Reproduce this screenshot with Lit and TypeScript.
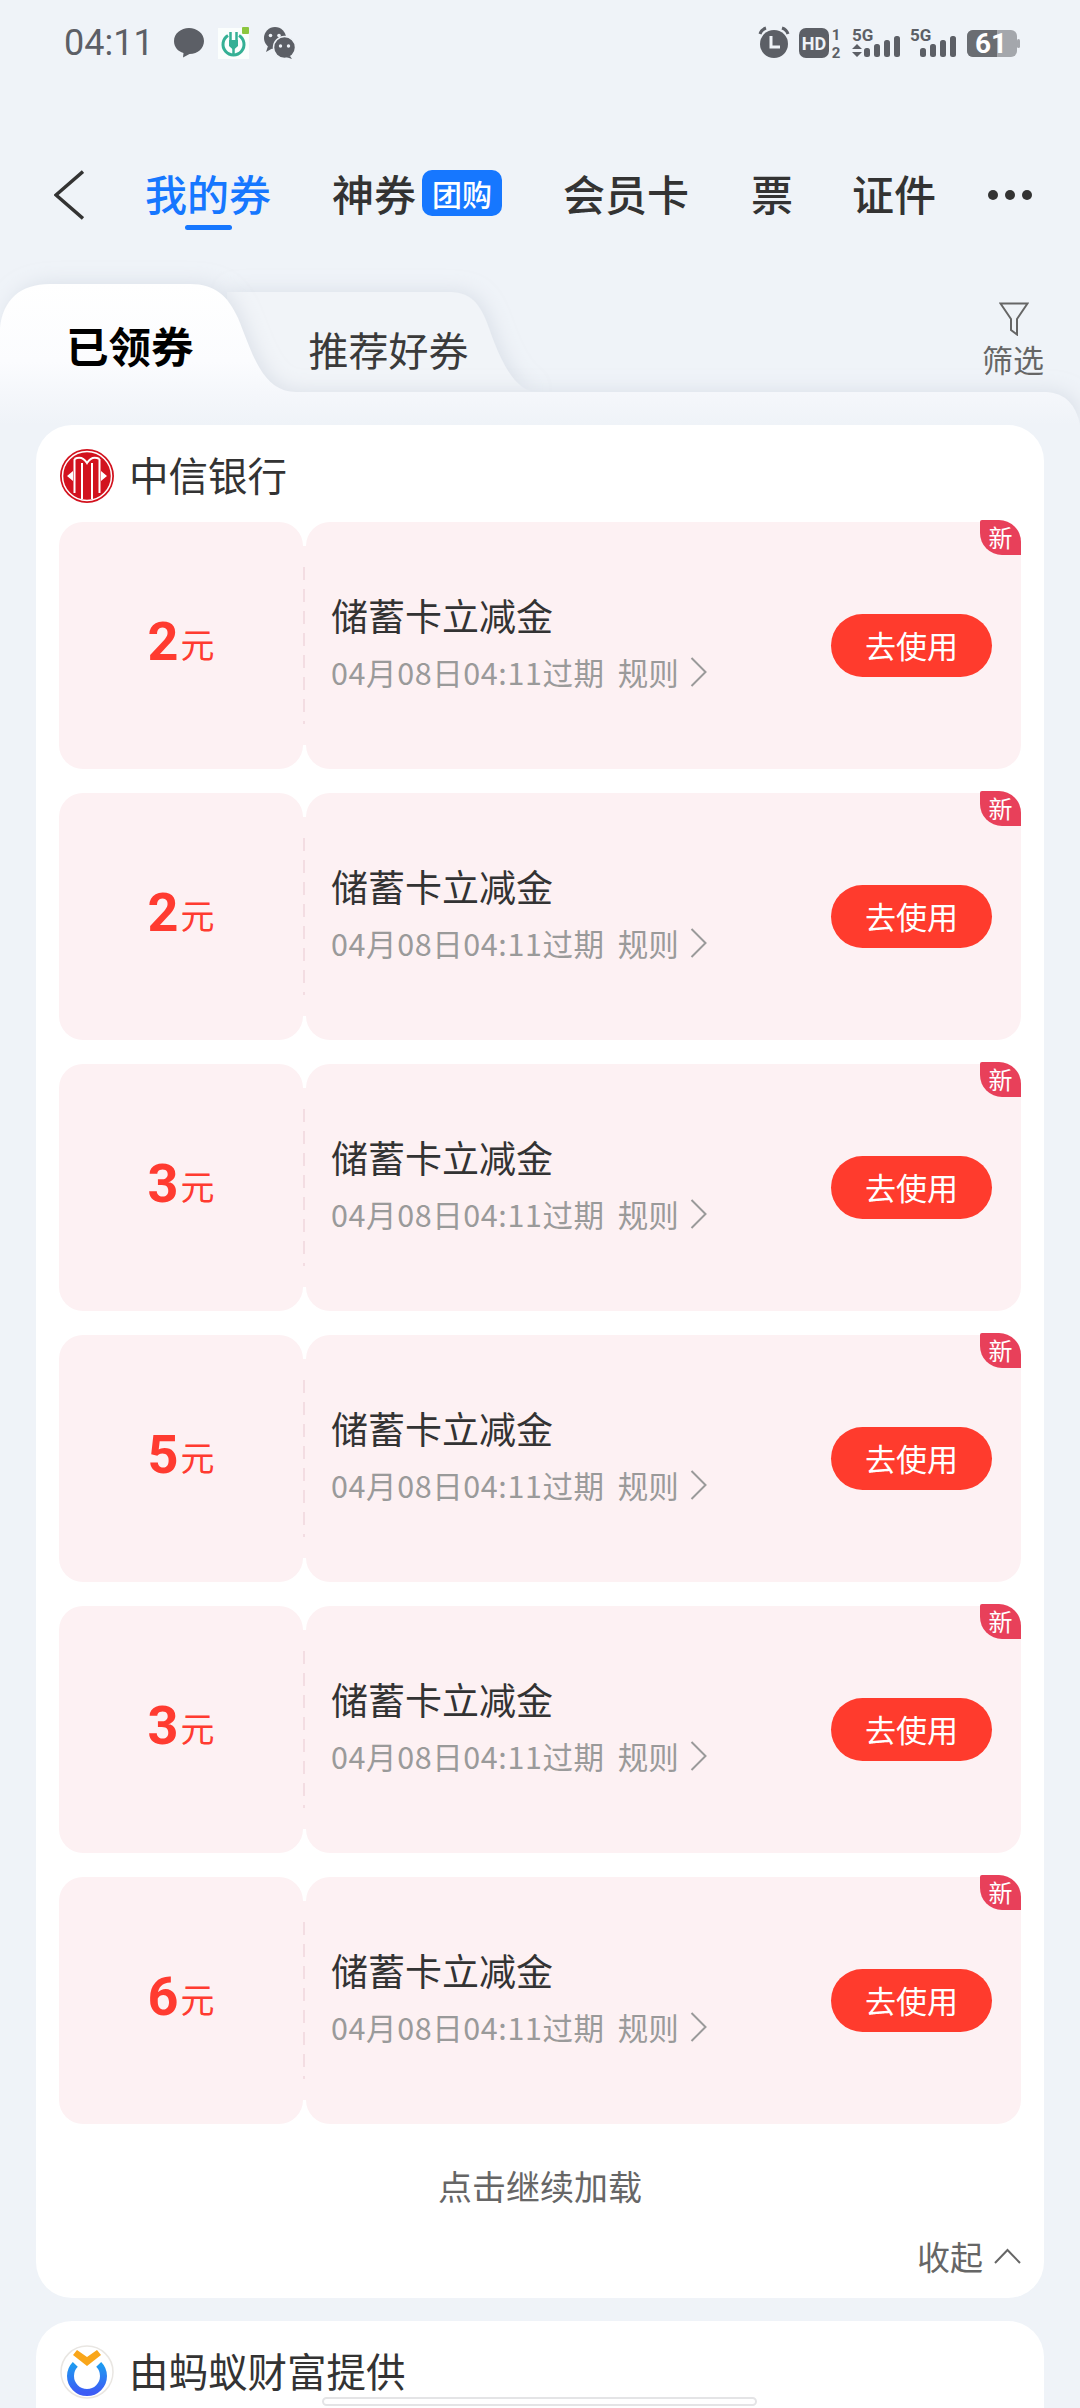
import { LitElement, html, css, svg } from "lit";
import { customElement } from "lit/decorators.js";

const CJK = css`"Noto Sans CJK SC", "Noto Sans", sans-serif`;

@customElement("coupon-row")
class CouponRow extends LitElement {
  static properties = { amount: {} };
  declare amount: string;
  constructor() {
    super();
    this.amount = "2";
  }
  static styles = css`
    :host { display: flex; height: 247px; font-family: ${CJK}; }
    .stub { width: 244px; background: #fdf1f3; border-radius: 24px; display: flex; align-items: center; justify-content: center; color: #ff3b30; }
    .amt { display: flex; align-items: baseline; transform: translateY(-4px); }
    .num { font-family: Roboto, sans-serif; font-weight: 700; font-size: 54px; line-height: 60px; }
    .yuan { font-size: 34px; line-height: 40px; margin-left: 2px; transform: translateY(-2px); }
    .gap { width: 3px; margin: 24px 0; display: flex; align-items: center; background: #fdf1f3; }
    .dash { width: 2px; height: 157px; background: repeating-linear-gradient(to bottom, #f3dde2 0 13px, transparent 13px 22px); }
    .main { position: relative; flex: 1; background: #fdf1f3; border-radius: 24px; display: flex; align-items: center; padding: 0 29px 0 25px; }
    .info { flex: 1; display: flex; flex-direction: column; gap: 13px; transform: translateY(-3px); }
    .title { font-size: 37px; line-height: 46px; color: #333; }
    .meta { display: flex; align-items: center; font-size: 30.5px; line-height: 42px; color: #9a9a9a; white-space: nowrap; }
    .date { letter-spacing: 0.6px; }
    .rule { margin-left: 13px; }
    .meta svg { margin-left: 11px; }
    .btn { width: 161px; height: 63px; box-sizing: border-box; padding-bottom: 3px; border-radius: 32px; background: #ff3b2d; color: #fff; font-size: 31px; display: flex; align-items: center; justify-content: center; }
    .new { position: absolute; right: 0; top: -2px; width: 41px; height: 35px; background: #e8405a; color: #fff; font-size: 24px; line-height: 33px; text-align: center; border-radius: 2px 22px 0 22px; }
  `;
  render() {
    return html`
      <div class="stub"><div class="amt"><span class="num">${this.amount}</span><span class="yuan">元</span></div></div>
      <div class="gap"><div class="dash"></div></div>
      <div class="main">
        <div class="info">
          <div class="title">储蓄卡立减金</div>
          <div class="meta"><span class="date">04月08日04:11过期</span><span class="rule">规则</span>
            <svg width="17" height="30" viewBox="0 0 17 30"><path d="M1.5 1 L15.5 15 L1.5 29" fill="none" stroke="#9a9a9a" stroke-width="2"/></svg>
          </div>
        </div>
        <div class="btn">去使用</div>
        <div class="new">新</div>
      </div>`;
  }
}

@customElement("app-root")
class AppRoot extends LitElement {
  static styles = css`
    :host { display: block; width: 1080px; height: 2408px; overflow: hidden; position: relative; background: #eff3f8; font-family: ${CJK}; color: #333; }
    .status { height: 86px; position: relative; display: flex; align-items: center; padding: 0 60px 0 64px; box-sizing: border-box; }
    .status .left, .status .right { display: flex; align-items: center; }
    .time { font-family: Roboto, sans-serif; font-size: 36px; color: #5c5f66; width: 110px; }
    .spacer { flex: 1; }
    .nav { height: 90px; margin-top: 64px; display: flex; align-items: center; position: relative; font-size: 42px; font-weight: 500; color: #333; white-space: nowrap; }
    .back { margin-left: 54px; width: 91px; display: flex; }
    .nav .item { position: relative; padding-bottom: 6px; }
    .active { color: #1677ff; width: 128px; }
    .active::after { content: ""; position: absolute; left: 40px; bottom: -1px; width: 47px; height: 5px; border-radius: 3px; background: #1677ff; }
    .shen { margin-left: 59px; display: flex; align-items: center; }
    .tag { margin-left: 6px; width: 80px; height: 46px; margin-top: 2px; border-radius: 10px; background: #1677ff; color: #fff; font-size: 30px; font-weight: 500; display: flex; align-items: center; justify-content: center; }
    .vip { margin-left: 61px; }
    .piao { margin-left: 62px; }
    .cert { margin-left: 59px; }
    .dots { margin-left: 52px; display: flex; gap: 7px; }
    .dots i { width: 10px; height: 10px; border-radius: 50%; background: #333; display: block; }
    .tabs { height: 185px; position: relative; display: flex; }
    .tabs-bg { position: absolute; left: 0; top: 0; }
    .t1, .t2, .filter { position: relative; }
    .t1 { margin: 83px 0 0 66px; font-size: 42.5px; line-height: 44px; font-weight: 700; color: #000; height: 44px; }
    .t2 { margin: 87px 0 0 115px; font-size: 40px; line-height: 44px; color: #3a3a3a; height: 44px; }
    .filter { margin: 62px 0 0 auto; width: 98px; display: flex; flex-direction: column; align-items: flex-start; color: #666; font-size: 31px; line-height: 40px; }
    .filter svg { margin-left: 17px; margin-bottom: 3px; }
    .card { margin: 0 36px; background: #fff; border-radius: 36px; width: 1008px; box-sizing: border-box; }
    .c1 { height: 1873px; padding: 24px 23px 0; display: flex; flex-direction: column; }
    .c2 { height: 200px; margin-top: 23px; padding: 24px 23px 0; }
    .head { height: 54px; display: flex; align-items: center; font-size: 39.5px; color: #333; gap: 15px; white-space: nowrap; padding-left: 1px; }
    .head span { padding-bottom: 6px; }
    .list { margin-top: 19px; display: flex; flex-direction: column; gap: 24px; }
    .more { margin-top: 38px; text-align: center; font-size: 34px; line-height: 48px; color: #666; }
    .fold { margin-top: 23px; display: flex; justify-content: flex-end; align-items: center; font-size: 33px; line-height: 46px; color: #666; gap: 11px; }
    .home { position: absolute; left: 322px; top: 2397px; width: 435px; height: 9px; box-sizing: border-box; border: 2px solid #e4e4e6; background: #fff; border-radius: 5px; }
  `;

  statusLeft() {
    return html`<svg width="124" height="34" viewBox="0 0 124 34">
      <path d="M15 2C7 2 0 7.500 0 15C0 21 4 25.500 9.500 27L9 31.500L15.500 28C24 28 30 22 30 15C30 7.500 23 2 15 2Z" fill="#5c5f66"/>
      <rect x="44" y="2" width="31" height="31" fill="#fbfefd"/>
      <path d="M54 9.500A10.500 10.500 0 1 0 65 9.500" fill="none" stroke="#35b095" stroke-width="3"/>
      <path d="M56.500 6V17M62.500 6V17" stroke="#35b095" stroke-width="2.500"/>
      <path d="M55 14H64V20L59.500 24L55 20Z" fill="#35b095"/>
      <path d="M59.500 22V29" stroke="#35b095" stroke-width="2.500"/>
      <rect x="68" y="1" width="7" height="7" rx="1" fill="#8cc63f"/>
      <circle cx="101" cy="12" r="11" fill="#5c5f66"/>
      <path d="M94 20L92 26L99 22Z" fill="#5c5f66"/>
      <circle cx="96.500" cy="9.500" r="1.800" fill="#eff3f8"/>
      <circle cx="105" cy="9.500" r="1.800" fill="#eff3f8"/>
      <circle cx="110.500" cy="21.500" r="11" fill="#5c5f66" stroke="#eff3f8" stroke-width="1.500"/>
      <path d="M116 30L118 33L112 31Z" fill="#5c5f66"/>
      <circle cx="106.500" cy="20" r="1.700" fill="#eff3f8"/>
      <circle cx="114.500" cy="20" r="1.700" fill="#eff3f8"/>
    </svg>`;
  }

  bars(x: number) {
    return svg`
      <rect x="${x}" y="22" width="6" height="9" rx="2.500" fill="#5c5f66"/>
      <rect x="${x + 10}" y="18" width="6" height="13" rx="2.500" fill="#5c5f66"/>
      <rect x="${x + 20}" y="14" width="6" height="17" rx="2.500" fill="#5c5f66"/>
      <rect x="${x + 30}" y="10" width="6" height="21" rx="2.500" fill="#5c5f66"/>`;
  }

  statusRight() {
    const S = "font-family:Roboto,sans-serif;font-weight:700";
    return html`<svg width="262" height="34" viewBox="0 0 262 34">
      <circle cx="16" cy="18" r="14" fill="#5c5f66"/>
      <path d="M13 10V21H22" fill="none" stroke="#eff3f8" stroke-width="3"/>
      <path d="M2 8C3 4.500 5 3 8 2M30 8C29 4.500 27 3 24 2" fill="none" stroke="#5c5f66" stroke-width="3"/>
      <rect x="41" y="2" width="30" height="30" rx="7" fill="#5c5f66"/>
      <text x="56" y="23.500" text-anchor="middle" font-size="18" fill="#eff3f8" style="${S}">HD</text>
      <text x="78" y="14" text-anchor="middle" font-size="15" fill="#5c5f66" style="${S}">1</text>
      <text x="78" y="32" text-anchor="middle" font-size="15" fill="#5c5f66" style="${S}">2</text>
      <text x="94" y="15" font-size="17" fill="#5c5f66" style="${S}">5G</text>
      <path d="M94 23L99 18L104 23ZM94 26L99 31L104 26Z" fill="#5c5f66"/>
      ${this.bars(106)}
      <text x="152" y="15" font-size="17" fill="#5c5f66" style="${S}">5G</text>
      ${this.bars(162)}
      <rect x="209" y="4" width="50" height="27" rx="6" fill="#a4a7ac"/>
      <path d="M215 4H239V31H215A6 6 0 0 1 209 25V10A6 6 0 0 1 215 4Z" fill="#6a6d72"/>
      <rect x="259" y="13" width="3" height="9" rx="1.500" fill="#a4a7ac"/>
      <text x="233" y="27" text-anchor="middle" font-size="28" fill="#fff" style="${S}">61</text>
    </svg>`;
  }

  citic() {
    return html`<svg width="54" height="54" viewBox="0 0 54 54">
      <circle cx="27" cy="27" r="27" fill="#d2121e"/>
      <circle cx="27" cy="27" r="24.500" fill="none" stroke="#fff" stroke-width="1.500"/>
      <path d="M22 14V50M32 14V50M14.500 10V44M39.500 10V44M14.500 10Q22 6 27 14Q32 6 39.500 10" fill="none" stroke="#fff" stroke-width="2"/>
      <path d="M7 27L13 22V32ZM47 27L41 22V32Z" fill="#fff"/>
    </svg>`;
  }

  ant() {
    return html`<svg width="54" height="54" viewBox="0 0 54 54">
      <defs><linearGradient id="ag" x1="0" y1="0" x2="0" y2="1"><stop offset="0" stop-color="#1e9bf0"/><stop offset="1" stop-color="#3d5cf5"/></linearGradient></defs>
      <circle cx="27" cy="27" r="26" fill="#fff" stroke="#e9e6e2" stroke-width="1.500"/>
      <path d="M15.300 19.400A16.500 16.500 0 1 0 38.700 19.400" fill="none" stroke="url(#ag)" stroke-width="7"/>
      <path d="M13 10L17 5L27 12L37 5L41 10L27 21Z" fill="#f9a61a"/>
    </svg>`;
  }

  render() {
    const amounts = ["2", "2", "3", "5", "3", "6"];
    return html`
      <div class="status">
        <div class="left"><span class="time">04:11</span>${this.statusLeft()}</div>
        <div class="spacer"></div>
        <div class="right">${this.statusRight()}</div>
      </div>
      <div class="nav">
        <span class="back"><svg width="30" height="50" viewBox="0 0 30 50"><path d="M29 1.500 L2 25 L29 48.500" fill="none" stroke="#333" stroke-width="3.500"/></svg></span>
        <span class="item active">我的券</span>
        <span class="item shen">神券<span class="tag">团购</span></span>
        <span class="item vip">会员卡</span>
        <span class="item piao">票</span>
        <span class="item cert">证件</span>
        <span class="dots"><i></i><i></i><i></i></span>
      </div>
      <div class="tabs">
        <svg class="tabs-bg" width="1080" height="185" viewBox="0 0 1080 185">
          <defs>
            <linearGradient id="w" gradientUnits="userSpaceOnUse" x1="0" y1="44" x2="0" y2="185"><stop offset="0" stop-color="#ffffff"/><stop offset="0.55" stop-color="#fbfcfe"/><stop offset="0.77" stop-color="#f5f7fb"/><stop offset="1" stop-color="#eff3f8"/></linearGradient>
            <filter id="s" x="-5%" y="-30%" width="112%" height="160%"><feDropShadow dx="4" dy="-2" stdDeviation="9" flood-color="#c9d0dc" flood-opacity="0.5"/></filter>
          </defs>
          <path d="M227 52H448C470 52 480 62 489 88C500 120 515 152 537 152H227Z" fill="#f1f4f8" filter="url(#s)"/>
          <path d="M0 185V88C3 60 20 44 50 44H190C215 44 228 56 238 78C252 112 262 152 296 152H1047Q1074 154 1080 185Z" fill="url(#w)" filter="url(#s)"/>
        </svg>
        <span class="t1">已领券</span>
        <span class="t2">推荐好券</span>
        <div class="filter">
          <svg width="30" height="34" viewBox="0 0 30 34"><path d="M1.500 1.500H28.500L18 17V32.500L12 28V17Z" fill="none" stroke="#666" stroke-width="2"/></svg>
          <span>筛选</span>
        </div>
      </div>
      <div class="card c1">
        <div class="head">${this.citic()}<span>中信银行</span></div>
        <div class="list">${amounts.map((a) => html`<coupon-row .amount=${a}></coupon-row>`)}</div>
        <div class="more">点击继续加载</div>
        <div class="fold"><span>收起</span><svg width="27" height="16" viewBox="0 0 27 16"><path d="M1 15 L13.500 2 L26 15" fill="none" stroke="#666" stroke-width="2"/></svg></div>
      </div>
      <div class="card c2">
        <div class="head">${this.ant()}<span>由蚂蚁财富提供</span></div>
      </div>
      <div class="home"></div>
    `;
  }
}
